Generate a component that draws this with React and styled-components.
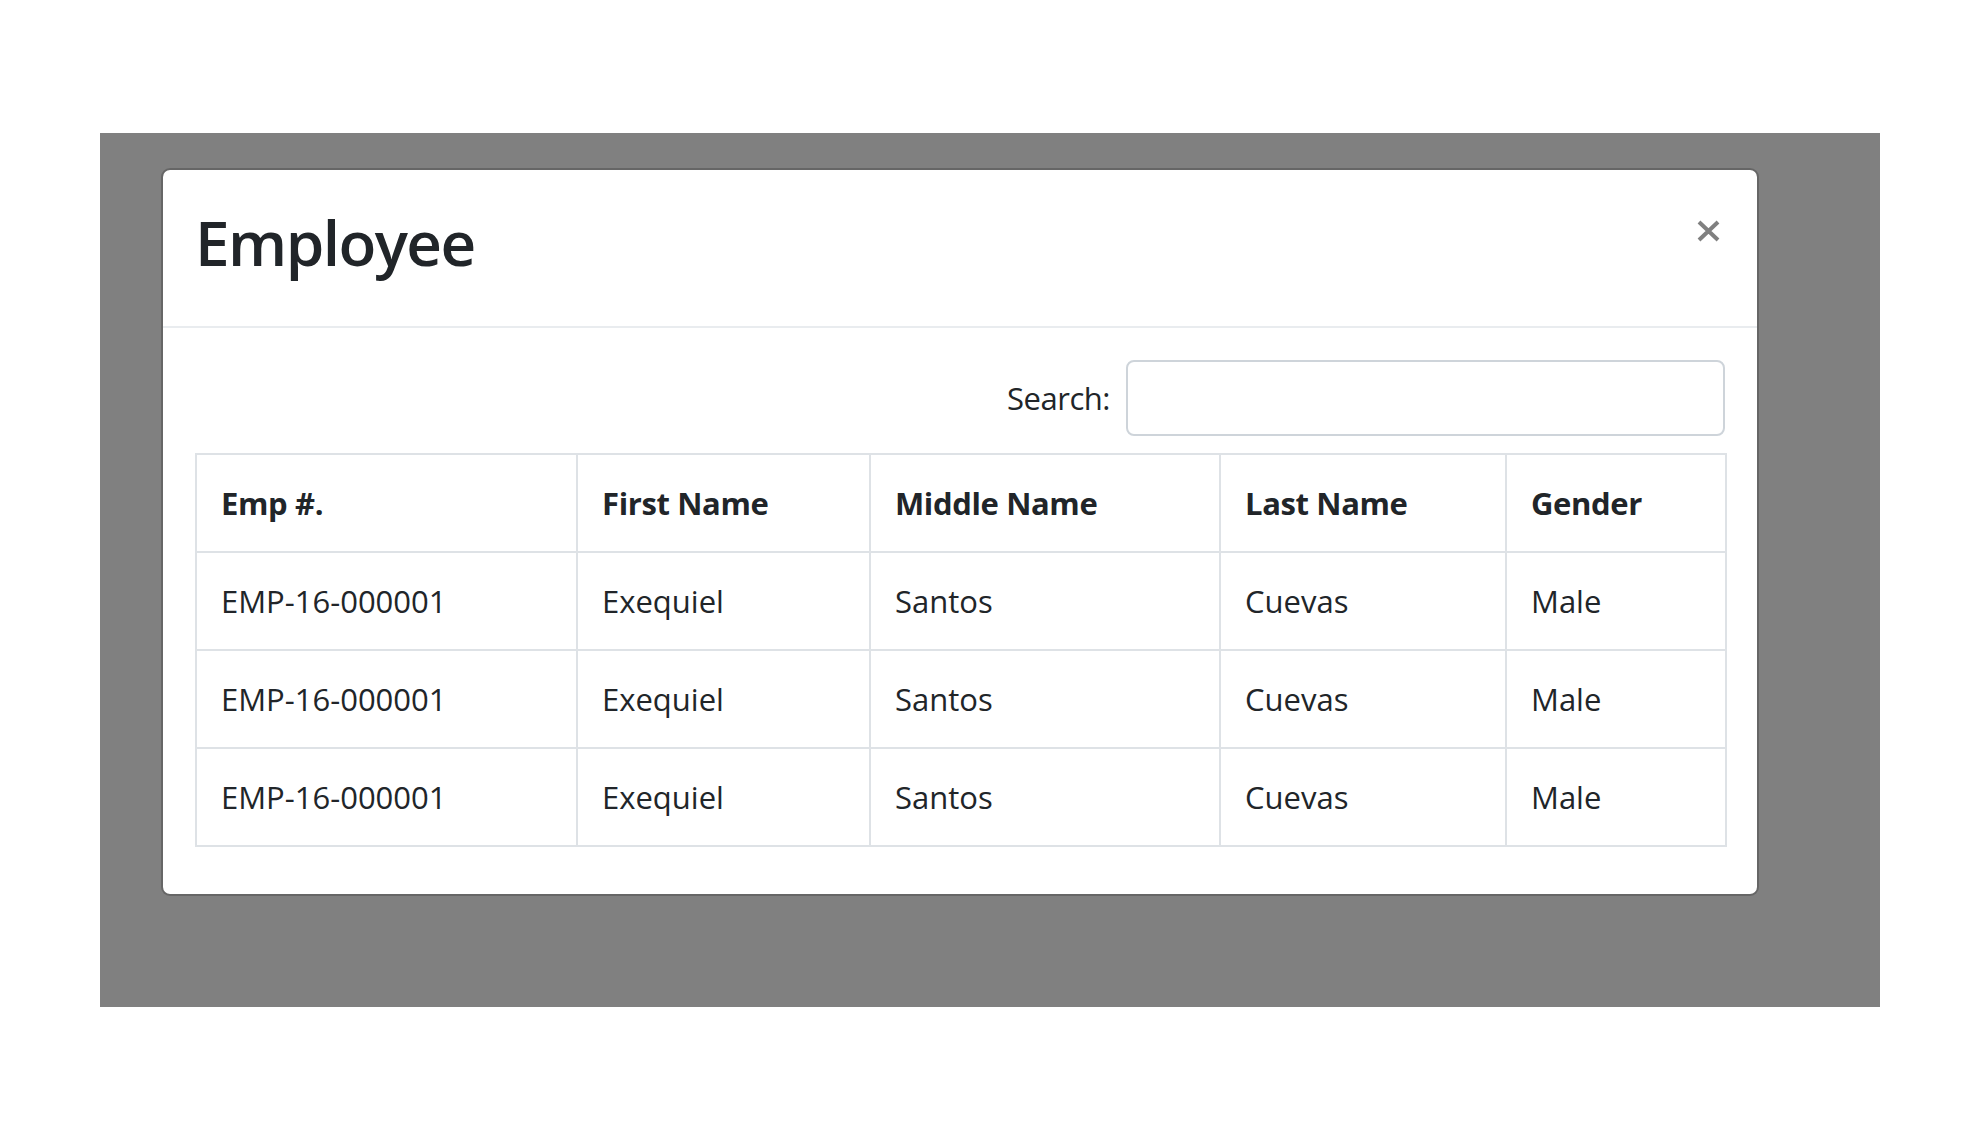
import React from "react";
import styled, { createGlobalStyle } from "styled-components";

const GlobalStyle = createGlobalStyle`
  body {
    margin: 0;
    background: #fff;
    font-family: "Open Sans", "Noto Sans", sans-serif;
    color: #212529;
  }
`;

const Page = styled.div`
  min-height: 1140px;
  padding: 133px 0 0 100px;
  box-sizing: border-box;
`;

const Backdrop = styled.div`
  width: 1780px;
  height: 874px;
  padding: 35px 0 0 61px;
  box-sizing: border-box;
  background: #808080;
`;

const Modal = styled.div`
  width: 1598px;
  box-sizing: border-box;
  background: #fff;
  background-clip: padding-box;
  border: 2px solid rgba(0, 0, 0, 0.2);
  border-radius: 9px;
`;

const Header = styled.div`
  display: flex;
  align-items: flex-start;
  justify-content: space-between;
  padding: 26px 32px 38px;
  border-bottom: 2px solid #e9ecef;
`;

const Title = styled.h1`
  margin: 0;
  font-size: 62px;
  font-weight: 600;
  line-height: 92px;
  letter-spacing: -0.025em;
`;

const Close = styled.button`
  display: flex;
  margin: 24px 5px 0 0;
  padding: 0;
  border: 0;
  background: none;
  color: #808080;
  cursor: pointer;
`;

const Body = styled.div`
  padding: 32px;
`;

const Filter = styled.label`
  display: flex;
  align-items: center;
  justify-content: flex-end;
  gap: 16px;
  margin-bottom: 17px;
  font-size: 31px;
  line-height: 48px;
  letter-spacing: -0.015em;
`;

const SearchInput = styled.input`
  width: 599px;
  height: 76px;
  box-sizing: border-box;
  padding: 12px 24px;
  border: 2px solid #ced4da;
  border-radius: 8px;
  font: inherit;
  outline: none;
`;

const Table = styled.table`
  width: 100%;
  table-layout: fixed;
  border-collapse: collapse;
  margin-bottom: 15px;
`;

const Col = styled.col`
  width: ${p => p.$w}px;
`;

const Cell = styled.td`
  padding: 24px;
  border: 2px solid #dee2e6;
  font-size: 31px;
  line-height: 48px;
  text-align: left;
  white-space: nowrap;
  font-weight: ${p => (p.as === "th" ? 700 : 400)};
  letter-spacing: ${p => (p.as === "th" ? "-0.012em" : "0")};
`;

const columns = [
  { label: "Emp #.", key: "id", width: 381 },
  { label: "First Name", key: "first", width: 293 },
  { label: "Middle Name", key: "middle", width: 350 },
  { label: "Last Name", key: "last", width: 286 },
  { label: "Gender", key: "gender", width: 220 }
];

const employees = [1, 2, 3].map(() => ({
  id: "EMP-16-000001",
  first: "Exequiel",
  middle: "Santos",
  last: "Cuevas",
  gender: "Male"
}));

const CloseIcon = () => (
  <svg width="23" height="22" viewBox="0 0 23 22">
    <path
      d="M2 2 L21 20 M21 2 L2 20"
      stroke="currentColor"
      strokeWidth="4"
      strokeLinecap="butt"
    />
  </svg>
);

export default function App() {
  return (
    <Page>
      <GlobalStyle />
      <Backdrop>
        <Modal>
          <Header>
            <Title>Employee</Title>
            <Close aria-label="Close">
              <CloseIcon />
            </Close>
          </Header>
          <Body>
            <Filter>
              Search:
              <SearchInput type="search" />
            </Filter>
            <Table>
              <colgroup>
                {columns.map(c => (
                  <Col key={c.key} $w={c.width} />
                ))}
              </colgroup>
              <thead>
                <tr>
                  {columns.map(c => (
                    <Cell as="th" key={c.key}>
                      {c.label}
                    </Cell>
                  ))}
                </tr>
              </thead>
              <tbody>
                {employees.map((e, i) => (
                  <tr key={i}>
                    {columns.map(c => (
                      <Cell key={c.key}>{e[c.key]}</Cell>
                    ))}
                  </tr>
                ))}
              </tbody>
            </Table>
          </Body>
        </Modal>
      </Backdrop>
    </Page>
  );
}
